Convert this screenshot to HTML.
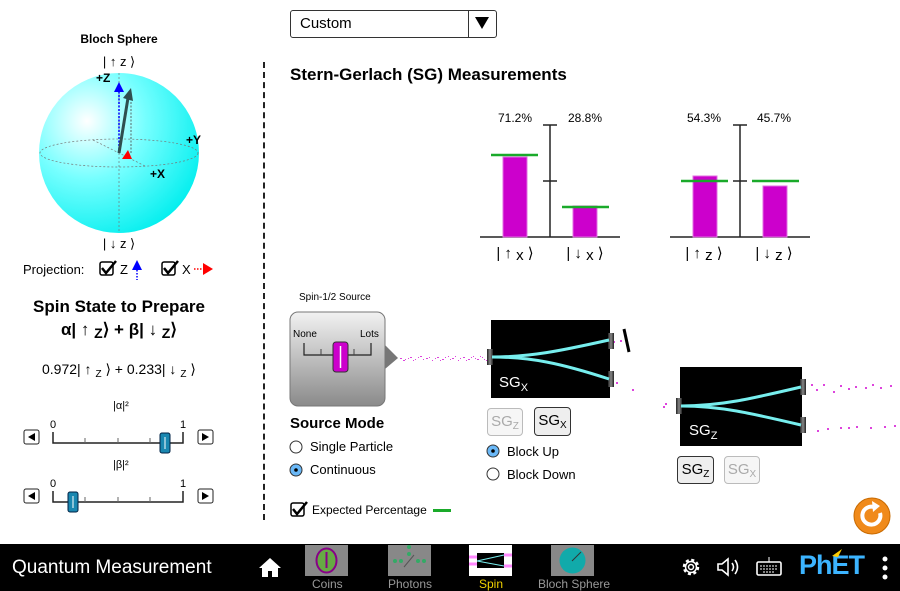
<!DOCTYPE html>
<html><head><meta charset="utf-8"><style>
body{margin:0;width:900px;height:591px;overflow:hidden;background:#fff;font-family:"Liberation Sans",Arial,sans-serif;position:relative}
.a{position:absolute;white-space:nowrap}
.b{font-weight:bold}
.btn{position:absolute;border:1px solid #333;border-radius:4px;background:#eee;font-size:15px;text-align:center;line-height:26px}
.btn.d{border-color:#bbb;color:#aaa;background:#f6f6f6}
sub{font-size:10px;vertical-align:-3px}
</style></head><body>
<div class="a" style="left:290px;top:10px;width:205px;height:26px;border:1px solid #333;border-radius:3px"></div>
<div class="a" style="left:468px;top:10px;width:1px;height:28px;background:#333"></div>
<div class="a" style="left:300px;top:15px;font-size:15px">Custom</div>
<svg class="a" style="left:474px;top:16px" width="16" height="14"><path d="M1 1H15L8 13Z"/></svg>
<div class="a" style="left:263px;top:62px;height:458px;border-left:2px dashed #222"></div>
<div class="a b" style="left:290px;top:65px;font-size:17px">Stern-Gerlach (SG) Measurements</div>

<svg class="a" style="left:470px;top:100px" width="350" height="170" font-family="Liberation Sans" font-size="12">
<g stroke="#222" stroke-width="1.5">
<line x1="10" y1="137" x2="150" y2="137"/><line x1="80" y1="25" x2="80" y2="137"/><line x1="73" y1="25" x2="87" y2="25"/><line x1="73" y1="81" x2="87" y2="81"/>
<line x1="200" y1="137" x2="340" y2="137"/><line x1="270" y1="25" x2="270" y2="137"/><line x1="263" y1="25" x2="277" y2="25"/><line x1="263" y1="81" x2="277" y2="81"/>
</g>
<g fill="#cc00cc" stroke="#e070e0"><rect x="33" y="57" width="24" height="80"/><rect x="103" y="106" width="24" height="31"/><rect x="223" y="76" width="24" height="61"/><rect x="293" y="86" width="24" height="51"/></g>
<g stroke="#1aaa2a" stroke-width="2.5"><line x1="21" y1="55" x2="68" y2="55"/><line x1="92" y1="107" x2="139" y2="107"/><line x1="211" y1="81" x2="258" y2="81"/><line x1="282" y1="81" x2="329" y2="81"/></g>
<g text-anchor="middle"><text x="45" y="22">71.2%</text><text x="115" y="22">28.8%</text><text x="234" y="22">54.3%</text><text x="304" y="22">45.7%</text></g>
<g font-size="15" text-anchor="middle"><text x="45" y="158">| ↑ <tspan dy="2">x</tspan><tspan dy="-2"> ⟩</tspan></text><text x="115" y="158">| ↓ <tspan dy="2">x</tspan><tspan dy="-2"> ⟩</tspan></text><text x="234" y="158">| ↑ <tspan dy="2">z</tspan><tspan dy="-2"> ⟩</tspan></text><text x="304" y="158">| ↓ <tspan dy="2">z</tspan><tspan dy="-2"> ⟩</tspan></text></g>
</svg>

<svg class="a" style="left:0;top:30px" width="260" height="250" font-family="Liberation Sans">
<defs><radialGradient id="g" cx="0.3" cy="0.3" r="0.8"><stop offset="0" stop-color="#fff"/><stop offset="0.45" stop-color="#7ff"/><stop offset="1" stop-color="#0ee"/></radialGradient></defs>
<text x="119" y="13" text-anchor="middle" font-size="12" font-weight="bold">Bloch Sphere</text>
<text x="119" y="36" text-anchor="middle" font-size="13">| ↑ z ⟩</text>
<circle cx="119" cy="123" r="80" fill="url(#g)"/>
<ellipse cx="119" cy="123" rx="79" ry="14" fill="none" stroke="#777" stroke-dasharray="2 2" stroke-width="0.7"/>
<line x1="119" y1="43" x2="119" y2="203" stroke="#777" stroke-dasharray="2 2" stroke-width="0.7"/>
<line x1="93" y1="110" x2="145" y2="136" stroke="#777" stroke-dasharray="2 2" stroke-width="0.7"/>
<line x1="119" y1="123" x2="119" y2="58" stroke="#00f" stroke-dasharray="2 1.5" stroke-width="1.5"/>
<path d="M114 62L119 52L124 62Z" fill="#00f"/>
<line x1="131" y1="123" x2="131" y2="64" stroke="#444" stroke-dasharray="2 1.5" stroke-width="0.8"/>
<line x1="119" y1="123" x2="128" y2="68" stroke="#2f4f4f" stroke-width="3"/>
<path d="M123 68L131 58L133 71Z" fill="#2f4f4f"/>
<path d="M122 129L128 120L132 129Z" fill="#f00"/>
<text x="96" y="52" font-size="12" font-weight="bold">+Z</text>
<text x="186" y="114" font-size="12" font-weight="bold">+Y</text>
<text x="150" y="148" font-size="12" font-weight="bold">+X</text>
<text x="119" y="218" text-anchor="middle" font-size="13">| ↓ z ⟩</text>
<text x="23" y="244" font-size="13">Projection:</text>
<rect x="100" y="232" width="13" height="13" rx="2" fill="#fff" stroke="#000" stroke-width="1.5"/><path d="M102 238L106 243L116 231" fill="none" stroke="#000" stroke-width="2.5"/>
<text x="120" y="244" font-size="13">Z</text>
<path d="M132 240L137 230L142 240Z" fill="#00f"/><line x1="137" y1="240" x2="137" y2="250" stroke="#00f" stroke-dasharray="1.5 1.5" stroke-width="1.5"/>
<rect x="162" y="232" width="13" height="13" rx="2" fill="#fff" stroke="#000" stroke-width="1.5"/><path d="M164 238L168 243L178 231" fill="none" stroke="#000" stroke-width="2.5"/>
<text x="182" y="244" font-size="13">X</text>
<line x1="194" y1="239" x2="204" y2="239" stroke="#f00" stroke-dasharray="1.5 1.5" stroke-width="1.5"/><path d="M203 233L213 239L203 245Z" fill="#f00"/>
</svg>

<div class="a b" style="left:0;width:238px;text-align:center;top:297px;font-size:17px">Spin State to Prepare</div>
<div class="a b" style="left:0;width:238px;text-align:center;top:320px;font-size:17px">α| ↑ <sub style="font-size:14px">Z</sub>⟩ + β| ↓ <sub style="font-size:14px">Z</sub>⟩</div>
<div class="a" style="left:42px;top:361px;font-size:14px">0.972| ↑ <sub>Z</sub> ⟩ + 0.233| ↓ <sub>Z</sub> ⟩</div>

<svg class="a" style="left:0;top:390px" width="240" height="130" font-family="Liberation Sans" font-size="11">
<text x="113" y="19">|α|²</text><text x="113" y="78">|β|²</text>
<g id="s1"><text x="50" y="38">0</text><text x="180" y="38">1</text>
<path d="M53 42V53H183V42" fill="none" stroke="#222" stroke-width="1.5"/>
<g stroke="#666"><line x1="85" y1="48" x2="85" y2="53"/><line x1="118" y1="48" x2="118" y2="53"/><line x1="150" y1="48" x2="150" y2="53"/></g>
<rect x="24" y="40" width="15" height="14" rx="2" fill="#fff" stroke="#222"/><path d="M35 43V51L28 47Z"/>
<rect x="198" y="40" width="15" height="14" rx="2" fill="#fff" stroke="#222"/><path d="M202 43V51L209 47Z"/></g>
<rect x="160" y="43" width="10" height="20" rx="2" fill="#1a87b0" stroke="#024"/><line x1="165" y1="47" x2="165" y2="59" stroke="#fff"/>
<use href="#s1" y="59"/>
<rect x="68" y="102" width="10" height="20" rx="2" fill="#1a87b0" stroke="#024"/><line x1="73" y1="106" x2="73" y2="118" stroke="#fff"/>
</svg>

<svg class="a" style="left:280px;top:285px" width="620" height="170" font-family="Liberation Sans">
<defs><linearGradient id="sg2" x1="0" y1="0" x2="0" y2="1"><stop offset="0" stop-color="#f2f2f2"/><stop offset="1" stop-color="#8a8a8a"/></linearGradient>
<linearGradient id="pt" x1="0" y1="0" x2="1" y2="0"><stop offset="0" stop-color="#222"/><stop offset="0.5" stop-color="#888"/><stop offset="1" stop-color="#222"/></linearGradient></defs>
<text x="19" y="15" font-size="10">Spin-1/2 Source</text>
<rect x="10" y="27" width="95" height="94" rx="8" fill="url(#sg2)" stroke="#777"/>
<text x="13" y="52" font-size="10">None</text><text x="80" y="52" font-size="10">Lots</text>
<path d="M24 58V70H91V58" fill="none" stroke="#222" stroke-width="1.2"/>
<g stroke="#444"><line x1="41" y1="64" x2="41" y2="70"/><line x1="74" y1="64" x2="74" y2="70"/></g>
<rect x="53" y="57" width="15" height="30" rx="3" fill="#cc00cc" stroke="#333"/><line x1="60.5" y1="61" x2="60.5" y2="83" stroke="#fff" stroke-width="1.5"/>
<path d="M105 60L118 73L105 84Z" fill="#777"/>
<g fill="#d4d">
<path d="M120 73h2v1h-2zM123 75h2v1h-2zM125 74h1v1h-1zM128 73h1v1h-1zM130 72h2v1h-2zM133 75h1v1h-1zM135 74h1v1h-1zM138 72h1v1h-1zM140 71h2v1h-2zM143 74h1v1h-1zM146 73h2v1h-2zM149 72h1v1h-1zM152 75h1v1h-1zM155 73h1v1h-1zM157 72h2v1h-2zM160 75h1v1h-1zM162 74h2v1h-2zM165 72h1v1h-1zM168 71h1v1h-1zM170 74h1v1h-1zM172 73h2v1h-2zM175 71h1v1h-1zM178 75h1v1h-1zM180 73h1v1h-1zM183 72h2v1h-2zM186 75h1v1h-1zM188 74h2v1h-2zM191 72h1v1h-1zM193 71h1v1h-1zM195 73h1v1h-1zM197 74h2v1h-2zM200 71h1v1h-1zM202 72h1v1h-1zM204 74h1v1h-1zM206 75h2v1h-2z"/>
<path d="M333 56h2v2h-2zM340 55h2v2h-2zM336 97h2v2h-2zM352 104h2v2h-2zM385 118h2v2h-2zM383 121h2v2h-2z"/>
<path d="M531 99h2v2h-2zM536 104h2v2h-2zM543 99h2v2h-2zM553 106h2v2h-2zM560 100h2v2h-2zM568 103h2v2h-2zM575 101h2v2h-2zM585 102h2v2h-2zM592 99h2v2h-2zM600 102h2v2h-2zM610 100h2v2h-2z"/>
<path d="M537 145h2v2h-2zM547 143h2v2h-2zM560 142h2v2h-2zM568 142h2v2h-2zM576 141h2v2h-2zM590 142h2v2h-2zM604 141h2v2h-2zM614 140h2v2h-2z"/>
</g>
<rect x="211" y="35" width="119" height="78" fill="#000"/>
<rect x="207" y="64" width="6" height="16" fill="url(#pt)"/>
<rect x="328" y="48" width="6" height="16" fill="url(#pt)"/><rect x="328" y="86" width="6" height="16" fill="url(#pt)"/>
<path d="M212 72C250 72 280 66 329 55M212 72C250 72 280 78 329 94" fill="none" stroke="#7ee" stroke-width="3"/>
<line x1="344" y1="44" x2="349" y2="67" stroke="#000" stroke-width="3"/>
<text x="219" y="102" font-size="15" fill="#fff">SG<tspan font-size="11" dy="4">X</tspan></text>
<rect x="400" y="82" width="122" height="79" fill="#000"/>
<rect x="396" y="113" width="6" height="16" fill="url(#pt)"/>
<rect x="520" y="94" width="6" height="16" fill="url(#pt)"/><rect x="520" y="132" width="6" height="16" fill="url(#pt)"/>
<path d="M401 121C440 121 470 114 521 102M401 121C440 121 470 128 521 140" fill="none" stroke="#7ee" stroke-width="3"/>
<text x="409" y="150" font-size="15" fill="#fff">SG<tspan font-size="11" dy="4">Z</tspan></text>
</svg>

<div class="btn d" style="left:487px;top:408px;width:34px;height:26px">SG<sub>Z</sub></div>
<div class="btn" style="left:534px;top:407px;width:35px;height:27px">SG<sub>X</sub></div>
<div class="btn" style="left:677px;top:456px;width:35px;height:26px">SG<sub>Z</sub></div>
<div class="btn d" style="left:724px;top:456px;width:34px;height:26px">SG<sub>X</sub></div>

<div class="a b" style="left:290px;top:415px;font-size:15px">Source Mode</div>
<svg class="a" style="left:285px;top:437px" width="30" height="40"><circle cx="11" cy="10" r="6" fill="#fff" stroke="#333"/><circle cx="11" cy="33" r="6" fill="#6ab8f7" stroke="#333"/><circle cx="11" cy="33" r="1.8"/></svg>
<div class="a" style="left:310px;top:439px;font-size:13px">Single Particle</div>
<div class="a" style="left:310px;top:462px;font-size:13px">Continuous</div>
<svg class="a" style="left:482px;top:441px" width="30" height="40"><circle cx="11" cy="10" r="6" fill="#6ab8f7" stroke="#333"/><circle cx="11" cy="10" r="1.8"/><circle cx="11" cy="33" r="6" fill="#fff" stroke="#333"/></svg>
<div class="a" style="left:507px;top:444px;font-size:13px">Block Up</div>
<div class="a" style="left:507px;top:467px;font-size:13px">Block Down</div>

<svg class="a" style="left:289px;top:500px" width="20" height="20"><rect x="2" y="3" width="13" height="13" rx="2" fill="#fff" stroke="#000" stroke-width="1.5"/><path d="M4 9L8 14L18 2" fill="none" stroke="#000" stroke-width="2.5"/></svg>
<div class="a" style="left:312px;top:503px;font-size:12px">Expected Percentage</div>
<div class="a" style="left:433px;top:509px;width:18px;height:3px;background:#1aaa2a"></div>

<svg class="a" style="left:852px;top:496px" width="40" height="40"><circle cx="20" cy="20" r="18" fill="#f08a1a" stroke="#c86a00"/><path d="M28 17A9 9 0 1 1 22 11" fill="none" stroke="#fff" stroke-width="4"/><path d="M20 5L28 10L21 16Z" fill="#fff"/></svg>

<div class="a" style="left:0;top:544px;width:900px;height:47px;background:#000"></div>
<div class="a" style="left:12px;top:557px;font-size:19px;color:#fff">Quantum Measurement</div>
<svg class="a" style="left:258px;top:556px" width="24" height="22"><path d="M12 2L1 12H4V21H10V15H14V21H20V12H23Z" fill="#fff"/></svg>
<div class="a" style="left:305px;top:545px;width:43px;height:31px;background:#888"></div>
<svg class="a" style="left:305px;top:545px" width="43" height="31"><ellipse cx="21.5" cy="15.5" rx="10" ry="12" fill="#6a4" stroke="#808" stroke-width="2"/><line x1="21.5" y1="7" x2="21.5" y2="23" stroke="#808" stroke-width="2"/></svg>
<div class="a" style="left:388px;top:545px;width:43px;height:31px;background:#888"></div>
<svg class="a" style="left:388px;top:545px" width="43" height="31" fill="#3a6"><circle cx="7" cy="16" r="2"/><circle cx="13" cy="16" r="2"/><circle cx="30" cy="16" r="2"/><circle cx="36" cy="16" r="2"/><circle cx="21" cy="9" r="2"/><circle cx="21" cy="2" r="2"/><line x1="16" y1="22" x2="26" y2="10" stroke="#555"/></svg>
<div class="a" style="left:469px;top:545px;width:43px;height:31px;background:#fff"></div>
<svg class="a" style="left:469px;top:545px" width="43" height="31"><rect x="8" y="8" width="27" height="15" fill="#000"/><path d="M0 12H8M35 10H43M0 19H8M35 21H43" stroke="#f8f" stroke-width="3"/><path d="M8 16L35 10M8 16L35 21" stroke="#7ee"/></svg>
<div class="a" style="left:551px;top:545px;width:43px;height:31px;background:#888"></div>
<svg class="a" style="left:551px;top:545px" width="43" height="31"><circle cx="21.5" cy="15.5" r="13" fill="#1aa"/><line x1="21" y1="16" x2="30" y2="7" stroke="#333"/></svg>
<div class="a" style="left:312px;top:577px;font-size:12px;color:#999">Coins</div>
<div class="a" style="left:388px;top:577px;font-size:12px;color:#999">Photons</div>
<div class="a" style="left:479px;top:577px;font-size:12px;color:#f0d000">Spin</div>
<div class="a" style="left:538px;top:577px;font-size:12px;color:#999">Bloch Sphere</div>
<svg class="a" style="left:680px;top:556px" width="22" height="22"><circle cx="11" cy="11" r="7" fill="none" stroke="#fff" stroke-width="2.5" stroke-dasharray="3 2.5"/><circle cx="11" cy="11" r="5.5" fill="none" stroke="#fff" stroke-width="1.5"/><circle cx="11" cy="11" r="2.5" fill="none" stroke="#fff" stroke-width="1.5"/></svg>
<svg class="a" style="left:716px;top:556px" width="28" height="22" fill="none" stroke="#fff" stroke-width="1.6"><path d="M2 8H6L12 3V19L6 14H2Z"/><path d="M16 7Q19 11 16 15M19 4Q24 11 19 18"/></svg>
<svg class="a" style="left:755px;top:555px" width="28" height="22"><rect x="2" y="7" width="24" height="13" rx="1.5" fill="none" stroke="#fff" stroke-width="1.6"/><path d="M5 11H23M5 14H23M8 17H20" stroke="#fff" stroke-dasharray="2 1"/><path d="M14 7V2" stroke="#fff"/></svg>
<div class="a b" style="left:799px;top:550px;font-size:27px;color:#3cb4ff;letter-spacing:-1px">PhET</div>
<svg class="a" style="left:830px;top:548px" width="14" height="10"><path d="M2 8L12 1L8 9Z" fill="#fc0"/></svg>
<svg class="a" style="left:880px;top:556px" width="10" height="24" fill="#fff"><circle cx="5" cy="3" r="2.5"/><circle cx="5" cy="12" r="2.5"/><circle cx="5" cy="21" r="2.5"/></svg>
</body></html>
